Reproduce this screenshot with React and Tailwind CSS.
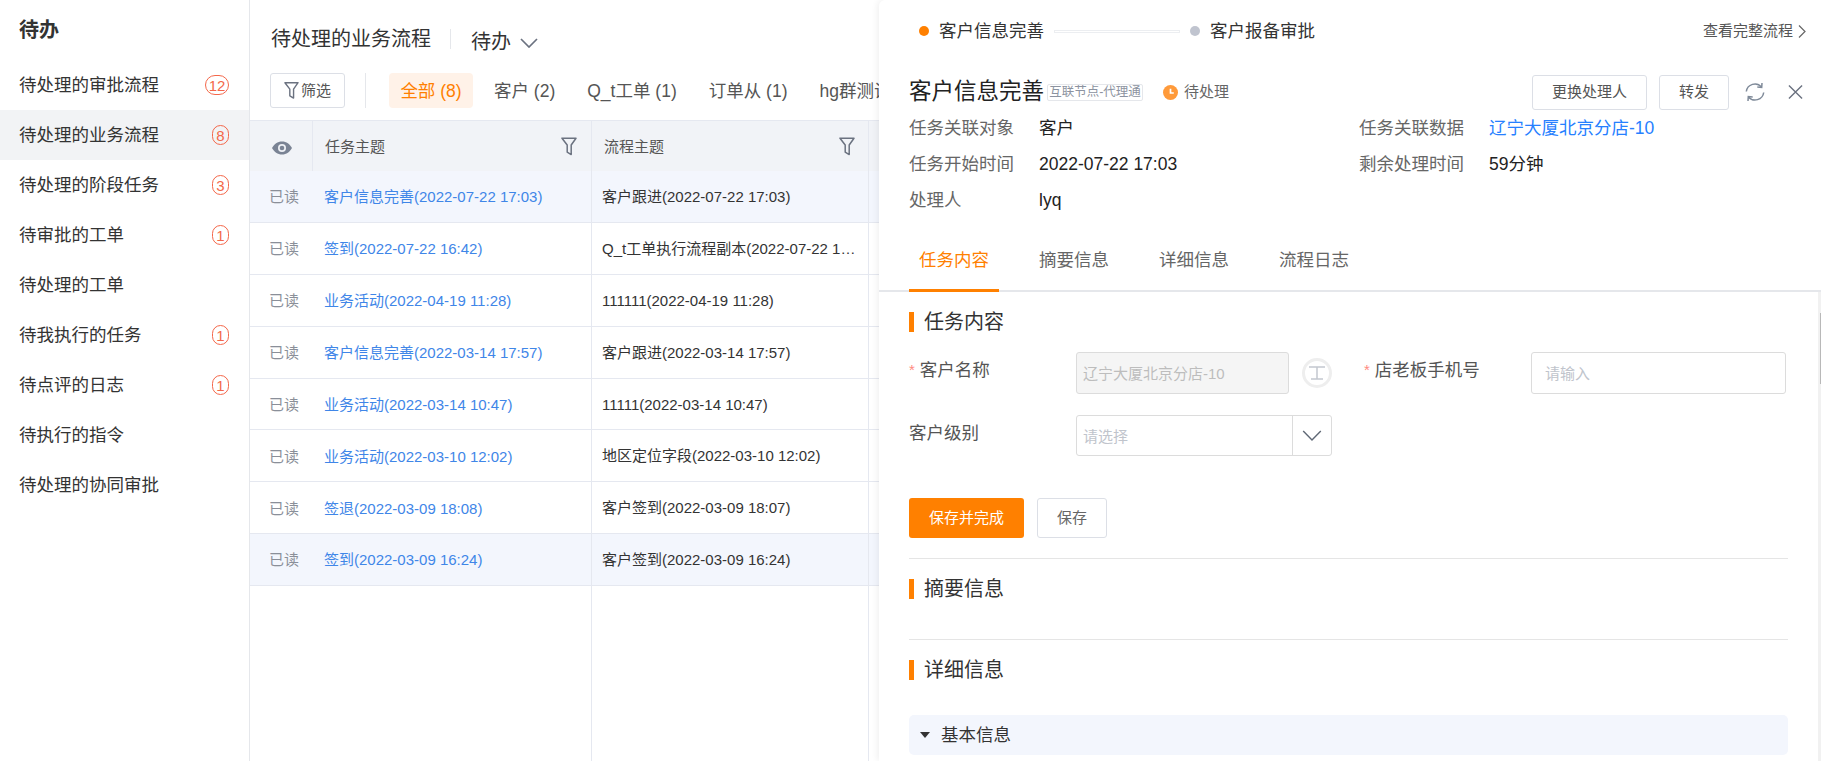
import React from "react";

const FONT = "[font-family:'Liberation_Sans','Noto_Sans_CJK_SC',sans-serif]";

function Funnel({ className = "w-[16px] h-[19px]", color = "#6b7280" }) {
  return (
    <svg viewBox="0 0 16 19" className={className} fill="none" stroke={color} strokeWidth="1.500" strokeLinejoin="round">
      <path d="M1 1.200h14L10.200 8v9.600L6.200 15.200V8Z" />
    </svg>
  );
}

function Eye() {
  return (
    <svg viewBox="0 0 20 14" className="w-[20px] h-[14px]">
      <path d="M10 .5C5.600.5 2 3.200 0 7c2 3.800 5.600 6.500 10 6.500S18 10.800 20 7C18 3.200 14.400.5 10 .5Z" fill="#7a8394" />
      <circle cx="10" cy="7" r="4" fill="#eef0f5" />
      <circle cx="10" cy="7" r="2.300" fill="#7a8394" />
    </svg>
  );
}

function Chevron({ className, color = "#6b7280", w = 1.5 }) {
  return (
    <svg viewBox="0 0 18 10" className={className} fill="none" stroke={color} strokeWidth={w}>
      <path d="M1 1l8 8 8-8" />
    </svg>
  );
}

function Badge({ n }) {
  const wide = String(n).length > 1;
  return (
    <span className={`flex h-[20px] items-center justify-center rounded-full border border-[#f4674a] text-[15px] leading-none text-[#f4674a] ${wide ? "w-[24px]" : "w-[17px]"}`}>
      {n}
    </span>
  );
}

const menu = [
  ["待处理的审批流程", 12],
  ["待处理的业务流程", 8, true],
  ["待处理的阶段任务", 3],
  ["待审批的工单", 1],
  ["待处理的工单"],
  ["待我执行的任务", 1],
  ["待点评的日志", 1],
  ["待执行的指令"],
  ["待处理的协同审批"],
];

const rows = [
  ["客户信息完善(2022-07-22 17:03)", "客户跟进(2022-07-22 17:03)", true],
  ["签到(2022-07-22 16:42)", "Q_t工单执行流程副本(2022-07-22 16:42)"],
  ["业务活动(2022-04-19 11:28)", "111111(2022-04-19 11:28)"],
  ["客户信息完善(2022-03-14 17:57)", "客户跟进(2022-03-14 17:57)"],
  ["业务活动(2022-03-14 10:47)", "11111(2022-03-14 10:47)"],
  ["业务活动(2022-03-10 12:02)", "地区定位字段(2022-03-10 12:02)"],
  ["签退(2022-03-09 18:08)", "客户签到(2022-03-09 18:07)"],
  ["签到(2022-03-09 16:24)", "客户签到(2022-03-09 16:24)", true],
];

function Sidebar() {
  return (
    <aside className="w-[250px] shrink-0 border-r border-[#e5e7eb]">
      <h1 className="pl-[19px] pt-[15px] text-[20px] font-bold leading-[30px] text-[#333]">待办</h1>
      <ul className="mt-[15px]">
        {menu.map(([label, n, active]) => (
          <li key={label} className={`flex h-[50px] items-center justify-between pl-[19px] pr-[20px] text-[17.500px] text-[#333] ${active ? "bg-[#f2f3f5]" : ""}`}>
            <span>{label}</span>
            {n ? <Badge n={n} /> : null}
          </li>
        ))}
      </ul>
    </aside>
  );
}

function ListArea() {
  return (
    <main className="min-w-0 flex-1 overflow-hidden">
      <div className="flex h-[73px] items-start pl-[21px] pt-[29px]">
        <span className="text-[20px] leading-[20px] text-[#333]">待处理的业务流程</span>
        <span className="ml-[19px] h-[20px] w-px bg-[#e5e7eb]" />
        <span className="ml-[20px] mt-[3px] text-[20px] leading-[20px] text-[#333]">待办</span>
        <Chevron className="ml-[9px] mt-[9px] h-[10px] w-[18px]" w={1.7} />
      </div>
      <div className="flex h-[35px] items-stretch pl-[20px]">
        <button className="flex w-[75px] items-center justify-center gap-[2px] rounded-[3px] border border-[#dcdfe6] pt-[1px] text-[15px] text-[#555]">
          <Funnel className="-mt-[2px] h-[19px] w-[15px]" />
          <span>筛选</span>
        </button>
        <span className="ml-[20px] w-px bg-[#e5e7eb]" />
        <span className="ml-[23px] flex w-[84px] items-center justify-center rounded-[4px] bg-[#fff2e8] pt-[1px] text-[17.500px] text-[#ff8000]">全部 (8)</span>
        <div className="ml-[21px] flex items-center gap-[32px] whitespace-nowrap pt-[1px] text-[17.500px] text-[#555]">
          <span>客户 (2)</span>
          <span>Q_t工单 (1)</span>
          <span>订单从 (1)</span>
          <span>hg群测试 (1)</span>
        </div>
      </div>
      <div className="mt-[12px] w-[700px] border-t border-[#e5e8f0]">
        <div className="flex h-[50px] bg-[#f1f3f7] text-[15px] text-[#555]">
          <div className="flex w-[63px] items-center justify-center border-r border-[#e5e8f0] pl-[1px] pt-[4px]">
            <Eye />
          </div>
          <div className="flex w-[279px] items-center justify-between border-r border-[#e5e8f0] pl-[12px] pr-[14px]">
            <span className="mt-[3px]">任务主题</span>
            <Funnel className="mt-[1px] h-[19px] w-[16px]" />
          </div>
          <div className="flex w-[277px] items-center justify-between border-r border-[#e5e8f0] pl-[12px] pr-[13px]">
            <span className="mt-[3px]">流程主题</span>
            <Funnel className="mt-[1px] h-[19px] w-[16px]" />
          </div>
        </div>
        {rows.map(([a, b, sel], i) => (
          <div key={i} className={`flex h-[51.900px] border-b border-[#e5e8f0] text-[15px] ${sel ? "bg-[#f3f6fd]" : ""}`}>
            <div className="flex w-[63px] items-center pl-[19px] pt-[2px] text-[#8a8f99]">已读</div>
            <div className="flex w-[279px] items-center border-r border-[#e5e8f0] pl-[11px] pt-[2px] text-[#3f86e8]">{a}</div>
            <div className="w-[277px] truncate border-r border-[#e5e8f0] pl-[10px] pr-[12px] leading-[52px] text-[#333]">{b}</div>
          </div>
        ))}
        <div className="ml-[341px] h-[200px] w-[278px] border-x border-[#e5e8f0]" />
      </div>
    </main>
  );
}

function SectionTitle({ children }) {
  return (
    <div className="flex h-[20px] items-center gap-[10px]">
      <span className="h-[20px] w-[5px] bg-[#ff8000]" />
      <span className="text-[20px] leading-[20px] text-[#333]">{children}</span>
    </div>
  );
}

function Meta({ label, children, blue }) {
  return (
    <div className="flex h-[36px] items-center text-[17.500px]">
      <span className="w-[130px] text-[#666]">{label}</span>
      <span className={blue ? "text-[#2680ff]" : "text-[#222]"}>{children}</span>
    </div>
  );
}

function Drawer() {
  return (
    <section className="absolute right-0 top-0 flex h-[761px] w-[942px] flex-col overflow-hidden rounded-tl-[6px] bg-white shadow-[-2px_0_6px_rgba(0,0,0,0.06)]">
      <div className="flex h-[62px] shrink-0 items-center pl-[40px] pr-[15px]">
        <span className="h-[10px] w-[10px] rounded-full bg-[#ff8000]" />
        <span className="ml-[10px] text-[17.500px] text-[#333]">客户信息完善</span>
        <span className="ml-[10px] h-[3px] w-[126px] border border-[#eceef1]" />
        <span className="ml-[10px] h-[10px] w-[10px] rounded-full bg-[#c0c4cf]" />
        <span className="ml-[10px] text-[17.500px] text-[#333]">客户报备审批</span>
        <span className="ml-auto flex items-center gap-[5px] text-[15px] text-[#555]">
          查看完整流程
          <svg viewBox="0 0 8 14" className="h-[15px] w-[8px]" fill="none" stroke="#666" strokeWidth="1.200"><path d="M1 1l6 6-6 6" /></svg>
        </span>
      </div>
      <div className="flex h-[48px] shrink-0 items-center pl-[30px] pr-[18px] pt-[12px]">
        <span className="text-[22.500px] text-[#222]">客户信息完善</span>
        <span className="ml-[3px] flex h-[17px] w-[96px] items-center justify-center rounded-[2px] border border-[#e5e7eb] text-[12.500px] text-[#8c93a0]">互联节点-代理通</span>
        <svg viewBox="0 0 16 16" className="ml-[20px] h-[15px] w-[15px]">
          <circle cx="8" cy="8" r="8" fill="#ff9a3a" />
          <path d="M8 4v4.500h3.500" fill="none" stroke="#fff" strokeWidth="1.800" />
        </svg>
        <span className="ml-[6px] text-[15px] text-[#666]">待处理</span>
        <button className="ml-auto h-[35px] w-[115px] rounded-[3px] border border-[#dcdfe6] text-[15px] text-[#555]">更换处理人</button>
        <button className="ml-[12px] h-[35px] w-[70px] rounded-[3px] border border-[#dcdfe6] text-[15px] text-[#555]">转发</button>
        <svg viewBox="0 0 20 20" className="ml-[16px] h-[20px] w-[20px]" fill="none" stroke="#7f8a99" strokeWidth="1.500">
          <path d="M1.300 9.500A8.700 8.700 0 0 1 16.500 5M18.700 10.500A8.700 8.700 0 0 1 3.500 15" />
          <path d="M17 1l-.3 4.400-4.400-.3M3 19l.3-4.400 4.400.3" />
        </svg>
        <svg viewBox="0 0 16 16" className="ml-[23px] h-[16px] w-[15px]" fill="none" stroke="#6b7280" strokeWidth="1.500">
          <path d="M1 1l14 14M15 1L1 15" />
        </svg>
      </div>
      <div className="flex shrink-0 pl-[30px]">
        <div className="w-[450px]">
          <Meta label="任务关联对象">客户</Meta>
          <Meta label="任务开始时间">2022-07-22 17:03</Meta>
          <Meta label="处理人">lyq</Meta>
        </div>
        <div>
          <Meta label="任务关联数据" blue>辽宁大厦北京分店-10</Meta>
          <Meta label="剩余处理时间">59分钟</Meta>
        </div>
      </div>
      <div className="mt-[21px] flex h-[53px] shrink-0 items-stretch gap-[30px] border-b-2 border-[#e5e7eb] pl-[30px] text-[17.500px] text-[#666]">
        <span className="-mb-[2px] flex items-center border-b-[3px] border-[#ff8000] px-[10px] pb-[8px] text-[#ff8000]">任务内容</span>
        <span className="flex items-center px-[10px] pb-[8px]">摘要信息</span>
        <span className="flex items-center px-[10px] pb-[8px]">详细信息</span>
        <span className="flex items-center px-[10px] pb-[8px]">流程日志</span>
      </div>
      <div className="flex min-h-0 flex-1">
        <div className="min-w-0 flex-1 overflow-hidden pl-[30px] pr-[30px] pt-[20px]">
          <SectionTitle>任务内容</SectionTitle>
          <div className="mt-[20px] flex h-[42px]">
            <label className="flex w-[167px] items-start pt-[7px] text-[17.500px] leading-[22px] text-[#555]">
              <span className="mr-[5px] text-[15px] text-[#ff8a80]">*</span>客户名称
            </label>
            <div className="flex h-[42px] w-[213px] items-center rounded-[3px] border border-[#dcdcdc] bg-[#f5f5f5] pl-[6px] pt-[2px] text-[15px] text-[#bdbdbd]">辽宁大厦北京分店-10</div>
            <span className="ml-[13px] flex h-[30px] w-[30px] translate-y-[6px] items-center justify-center rounded-full border-[3px] border-[#eeeeee]">
              <svg viewBox="0 0 16 14" className="h-[14px] w-[16px]" fill="none" stroke="#c4c8cf" strokeWidth="1.500"><path d="M0 1h16M8 1v12M2 13h12" /></svg>
            </span>
            <label className="ml-[32px] flex w-[167px] items-start pt-[7px] text-[17.500px] leading-[22px] text-[#555]">
              <span className="mr-[5px] text-[15px] text-[#ff8a80]">*</span>店老板手机号
            </label>
            <div className="flex h-[42px] w-[255px] items-center rounded-[3px] border border-[#dcdcdc] pl-[13px] pt-[2px] text-[15px] text-[#c0c4cc]">请输入</div>
          </div>
          <div className="mt-[21px] flex h-[41px]">
            <label className="w-[167px] pt-[7px] text-[17.500px] leading-[22px] text-[#555]">客户级别</label>
            <div className="flex w-[256px] items-stretch rounded-[3px] border border-[#dcdcdc] text-[15px] text-[#c0c4cc]">
              <span className="flex flex-1 items-center pl-[6px] pt-[3px]">请选择</span>
              <span className="flex w-[39px] items-center justify-center border-l border-[#dcdcdc]">
                <Chevron className="h-[11px] w-[20px]" color="#5f6875" w={1.300} />
              </span>
            </div>
          </div>
          <div className="mt-[42px] flex gap-[13px]">
            <button className="h-[40px] w-[115px] rounded-[3px] bg-[#ff8000] text-[15px] text-white">保存并完成</button>
            <button className="h-[40px] w-[70px] rounded-[3px] border border-[#dcdfe6] text-[15px] text-[#666]">保存</button>
          </div>
          <div className="mt-[20px] border-t border-[#e5e5e5] pt-[20px]">
            <SectionTitle>摘要信息</SectionTitle>
          </div>
          <div className="mt-[40px] border-t border-[#e5e5e5] pt-[20px]">
            <SectionTitle>详细信息</SectionTitle>
          </div>
          <div className="mt-[35px] flex h-[40px] items-center rounded-[5px] bg-[#f3f6fd] pl-[11px] text-[17.500px] text-[#333]">
            <span className="flex h-[20px] w-[10px] items-center justify-center">
              <span className="h-0 w-0 border-x-[5px] border-t-[6px] border-x-transparent border-t-[#333]" />
            </span>
            <span className="ml-[11px]">基本信息</span>
          </div>
        </div>
        <div className="w-[3px] shrink-0 bg-[#f1f1f1]">
          <div className="ml-auto mt-[21px] h-[71px] w-[1px] bg-[#b8b8b8]" />
        </div>
      </div>
    </section>
  );
}

export default function App() {
  return (
    <div className={`relative flex h-[761px] w-[1821px] overflow-hidden bg-white ${FONT}`}>
      <Sidebar />
      <ListArea />
      <Drawer />
    </div>
  );
}
